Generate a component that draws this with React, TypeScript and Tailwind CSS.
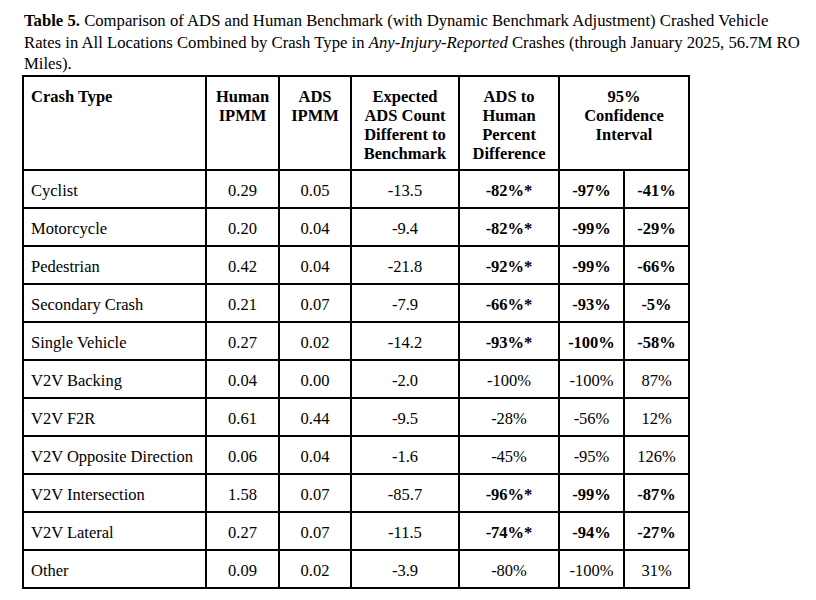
import React from "react";

type Row = {
  type: string;
  human: string;
  ads: string;
  exp: string;
  pct: string;
  lo: string;
  hi: string;
  bold: boolean;
};

const rows: Row[] = [
  { type: "Cyclist", human: "0.29", ads: "0.05", exp: "-13.5", pct: "-82%*", lo: "-97%", hi: "-41%", bold: true },
  { type: "Motorcycle", human: "0.20", ads: "0.04", exp: "-9.4", pct: "-82%*", lo: "-99%", hi: "-29%", bold: true },
  { type: "Pedestrian", human: "0.42", ads: "0.04", exp: "-21.8", pct: "-92%*", lo: "-99%", hi: "-66%", bold: true },
  { type: "Secondary Crash", human: "0.21", ads: "0.07", exp: "-7.9", pct: "-66%*", lo: "-93%", hi: "-5%", bold: true },
  { type: "Single Vehicle", human: "0.27", ads: "0.02", exp: "-14.2", pct: "-93%*", lo: "-100%", hi: "-58%", bold: true },
  { type: "V2V Backing", human: "0.04", ads: "0.00", exp: "-2.0", pct: "-100%", lo: "-100%", hi: "87%", bold: false },
  { type: "V2V F2R", human: "0.61", ads: "0.44", exp: "-9.5", pct: "-28%", lo: "-56%", hi: "12%", bold: false },
  { type: "V2V Opposite Direction", human: "0.06", ads: "0.04", exp: "-1.6", pct: "-45%", lo: "-95%", hi: "126%", bold: false },
  { type: "V2V Intersection", human: "1.58", ads: "0.07", exp: "-85.7", pct: "-96%*", lo: "-99%", hi: "-87%", bold: true },
  { type: "V2V Lateral", human: "0.27", ads: "0.07", exp: "-11.5", pct: "-74%*", lo: "-94%", hi: "-27%", bold: true },
  { type: "Other", human: "0.09", ads: "0.02", exp: "-3.9", pct: "-80%", lo: "-100%", hi: "31%", bold: false },
];

const th = "border-2 border-black align-top text-center font-bold pt-[10px] px-[4px] leading-[19px]";
const td = "border-2 border-black align-middle text-center pt-[4px] leading-[19px] h-[38px]";

export default function App() {
  return (
    <div className="w-[816px] h-[600px] bg-white text-black overflow-hidden font-['Liberation_Serif','Times_New_Roman',serif]">
      <div className="pl-[24px] pt-[10px] text-[16.7px] leading-[21.5px] whitespace-nowrap">
        <span className="font-bold">Table 5.</span> Comparison of ADS and Human Benchmark (with Dynamic Benchmark Adjustment) Crashed Vehicle
        <br />
        Rates in All Locations Combined by Crash Type in <i>Any-Injury-Reported</i> Crashes (through January 2025, 56.7M RO
        <br />
        Miles).
      </div>
      <div className="pl-[22px]">
        <table className="border-collapse table-fixed w-[668px] text-[16.5px]">
          <colgroup>
            <col className="w-[183px]" />
            <col className="w-[73px]" />
            <col className="w-[72px]" />
            <col className="w-[108px]" />
            <col className="w-[100px]" />
            <col className="w-[65px]" />
            <col className="w-[65px]" />
          </colgroup>
          <thead>
            <tr className="h-[94px]">
              <th className={th + " !text-left pl-[7px]"}>Crash Type</th>
              <th className={th}>Human<br />IPMM</th>
              <th className={th}>ADS<br />IPMM</th>
              <th className={th}>Expected<br />ADS Count<br />Different to<br />Benchmark</th>
              <th className={th}>ADS to<br />Human<br />Percent<br />Difference</th>
              <th className={th} colSpan={2}>95%<br />Confidence<br />Interval</th>
            </tr>
          </thead>
          <tbody>
            {rows.map((r) => (
              <tr key={r.type}>
                <td className={td + " !text-left pl-[7px] whitespace-nowrap"}>{r.type}</td>
                <td className={td}>{r.human}</td>
                <td className={td}>{r.ads}</td>
                <td className={td}>{r.exp}</td>
                <td className={td + (r.bold ? " font-bold" : "")}>{r.pct}</td>
                <td className={td + (r.bold ? " font-bold" : "")}>{r.lo}</td>
                <td className={td + (r.bold ? " font-bold" : "")}>{r.hi}</td>
              </tr>
            ))}
          </tbody>
        </table>
      </div>
    </div>
  );
}
